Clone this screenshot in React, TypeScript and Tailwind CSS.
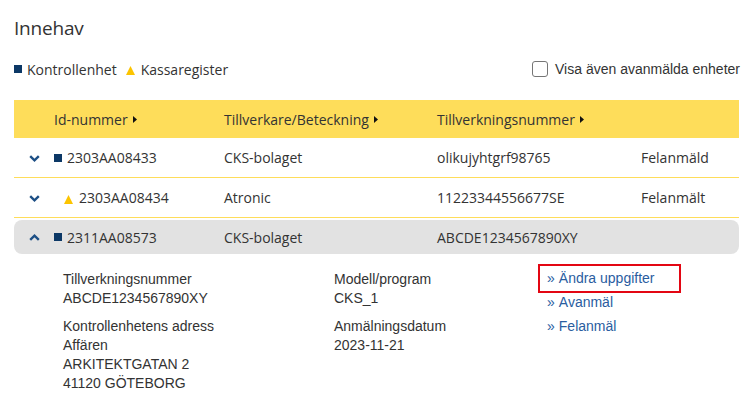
import React from 'react';

type Row = {
  id: string;
  kind: 'kontroll' | 'kassa';
  maker: string;
  serial: string;
  status: string;
  open?: boolean;
};

const ROWS: Row[] = [
  { id: '2303AA08433', kind: 'kontroll', maker: 'CKS-bolaget', serial: 'olikujyhtgrf98765', status: 'Felanmäld' },
  { id: '2303AA08434', kind: 'kassa', maker: 'Atronic', serial: '11223344556677SE', status: 'Felanmält' },
  { id: '2311AA08573', kind: 'kontroll', maker: 'CKS-bolaget', serial: 'ABCDE1234567890XY', status: '', open: true },
];

const Square = () => <span className="inline-block w-[8px] h-[8px] bg-[#0c3866]" />;

const Triangle = () => (
  <svg width="9" height="9" viewBox="0 0 9 9" className="inline-block">
    <polygon points="4.5,0 9,9 0,9" fill="#fcc400" />
  </svg>
);

const Caret = () => (
  <svg width="4" height="7" viewBox="0 0 4 7" className="inline-block ml-[5px]">
    <polygon points="0,0 4,3.5 0,7" fill="#111" />
  </svg>
);

const Chevron = ({ up }: { up?: boolean }) => (
  <svg width="11" height="7" viewBox="0 0 11 7" className={up ? 'rotate-180' : ''}>
    <path d="M1.2 1.2 L5.5 5.3 L9.8 1.2" fill="none" stroke="#1d4f85" strokeWidth="2.4" />
  </svg>
);

const GRID = 'grid grid-cols-[40px_170px_213px_204px_1fr] items-center';

const App: React.FC = () => {
  return (
    <div className="w-[753px] h-[412px] bg-white overflow-hidden px-[14px] text-[#333] font-['Open_Sans',sans-serif]">
      <h1 className="pt-[14px] text-[19px] leading-[28px] tracking-[-0.2px]">Innehav</h1>

      <div className="mt-[18px] flex items-center justify-between h-[18px]">
        <div className="flex items-center text-[14px]">
          <Square />
          <span className="ml-[5px]">Kontrollenhet</span>
          <span className="ml-[9px]"><Triangle /></span>
          <span className="ml-[6px]">Kassaregister</span>
        </div>
        <label className="flex items-center font-['Liberation_Sans',Arial,sans-serif] text-[14px] mr-[-1px]">
          <span className="w-[16px] h-[16px] rounded-[3px] border border-[#767676] bg-white" />
          <span className="ml-[7px]">Visa även avanmälda enheter</span>
        </label>
      </div>

      <div className="mt-[22px] w-[725px]">
        <div className={`${GRID} h-[38px] bg-[#fedd5a] text-[14px]`}>
          <span />
          <span className="flex items-center">Id-nummer<Caret /></span>
          <span className="flex items-center">Tillverkare/Beteckning<Caret /></span>
          <span className="flex items-center">Tillverkningsnummer<Caret /></span>
          <span />
        </div>

        {ROWS.map((r, i) => (
          <div key={r.id}>
            {r.open ? (
              <div className={`${GRID} mt-[2px] h-[34px] bg-[#e2e2e2] rounded-[8px] text-[14px]`}>
                <span className="flex justify-center pl-[1px]"><Chevron up /></span>
                <span className="flex items-center">
                  <Square />
                  <span className="ml-[5px]">{r.id}</span>
                </span>
                <span>{r.maker}</span>
                <span>{r.serial}</span>
                <span>{r.status}</span>
              </div>
            ) : (
              <div className={`${GRID} h-[40px] text-[14px] ${i < ROWS.length - 1 ? 'border-b border-[#fedd5a]' : ''}`}>
                <span className="flex justify-center pl-[1px] pt-[1px]"><Chevron /></span>
                <span className="flex items-center">
                  {r.kind === 'kontroll' ? (
                    <>
                      <Square />
                      <span className="ml-[5px]">{r.id}</span>
                    </>
                  ) : (
                    <>
                      <span className="ml-[10px]"><Triangle /></span>
                      <span className="ml-[6px]">{r.id}</span>
                    </>
                  )}
                </span>
                <span>{r.maker}</span>
                <span>{r.serial}</span>
                <span>{r.status}</span>
              </div>
            )}
          </div>
        ))}

        <div className="grid grid-cols-[271px_213px_1fr] pl-[49px] pt-[16px] font-['Liberation_Sans',Arial,sans-serif] text-[14px] leading-[19px]">
          <div>
            <div>Tillverkningsnummer</div>
            <div>ABCDE1234567890XY</div>
            <div className="mt-[9px]">Kontrollenhetens adress</div>
            <div>Affären</div>
            <div>ARKITEKTGATAN 2</div>
            <div>41120 GÖTEBORG</div>
          </div>
          <div>
            <div>Modell/program</div>
            <div>CKS_1</div>
            <div className="mt-[9px]">Anmälningsdatum</div>
            <div>2023-11-21</div>
          </div>
          <div className="flex flex-col items-start text-[#2a5d9f] ml-[-9px] mt-[-6px]">
            <a className="flex items-center border-2 border-[#e30613] px-[7px] h-[29px] w-[143px]">
              <span className="text-[14px] mr-[4px]">»</span>Ändra uppgifter
            </a>
            <a className="flex items-center px-[9px] mt-[-3px] h-[24px]">
              <span className="text-[14px] mr-[4px]">»</span>Avanmäl
            </a>
            <a className="flex items-center px-[9px] h-[24px]">
              <span className="text-[14px] mr-[4px]">»</span>Felanmäl
            </a>
          </div>
        </div>
      </div>
    </div>
  );
};

export default App;
